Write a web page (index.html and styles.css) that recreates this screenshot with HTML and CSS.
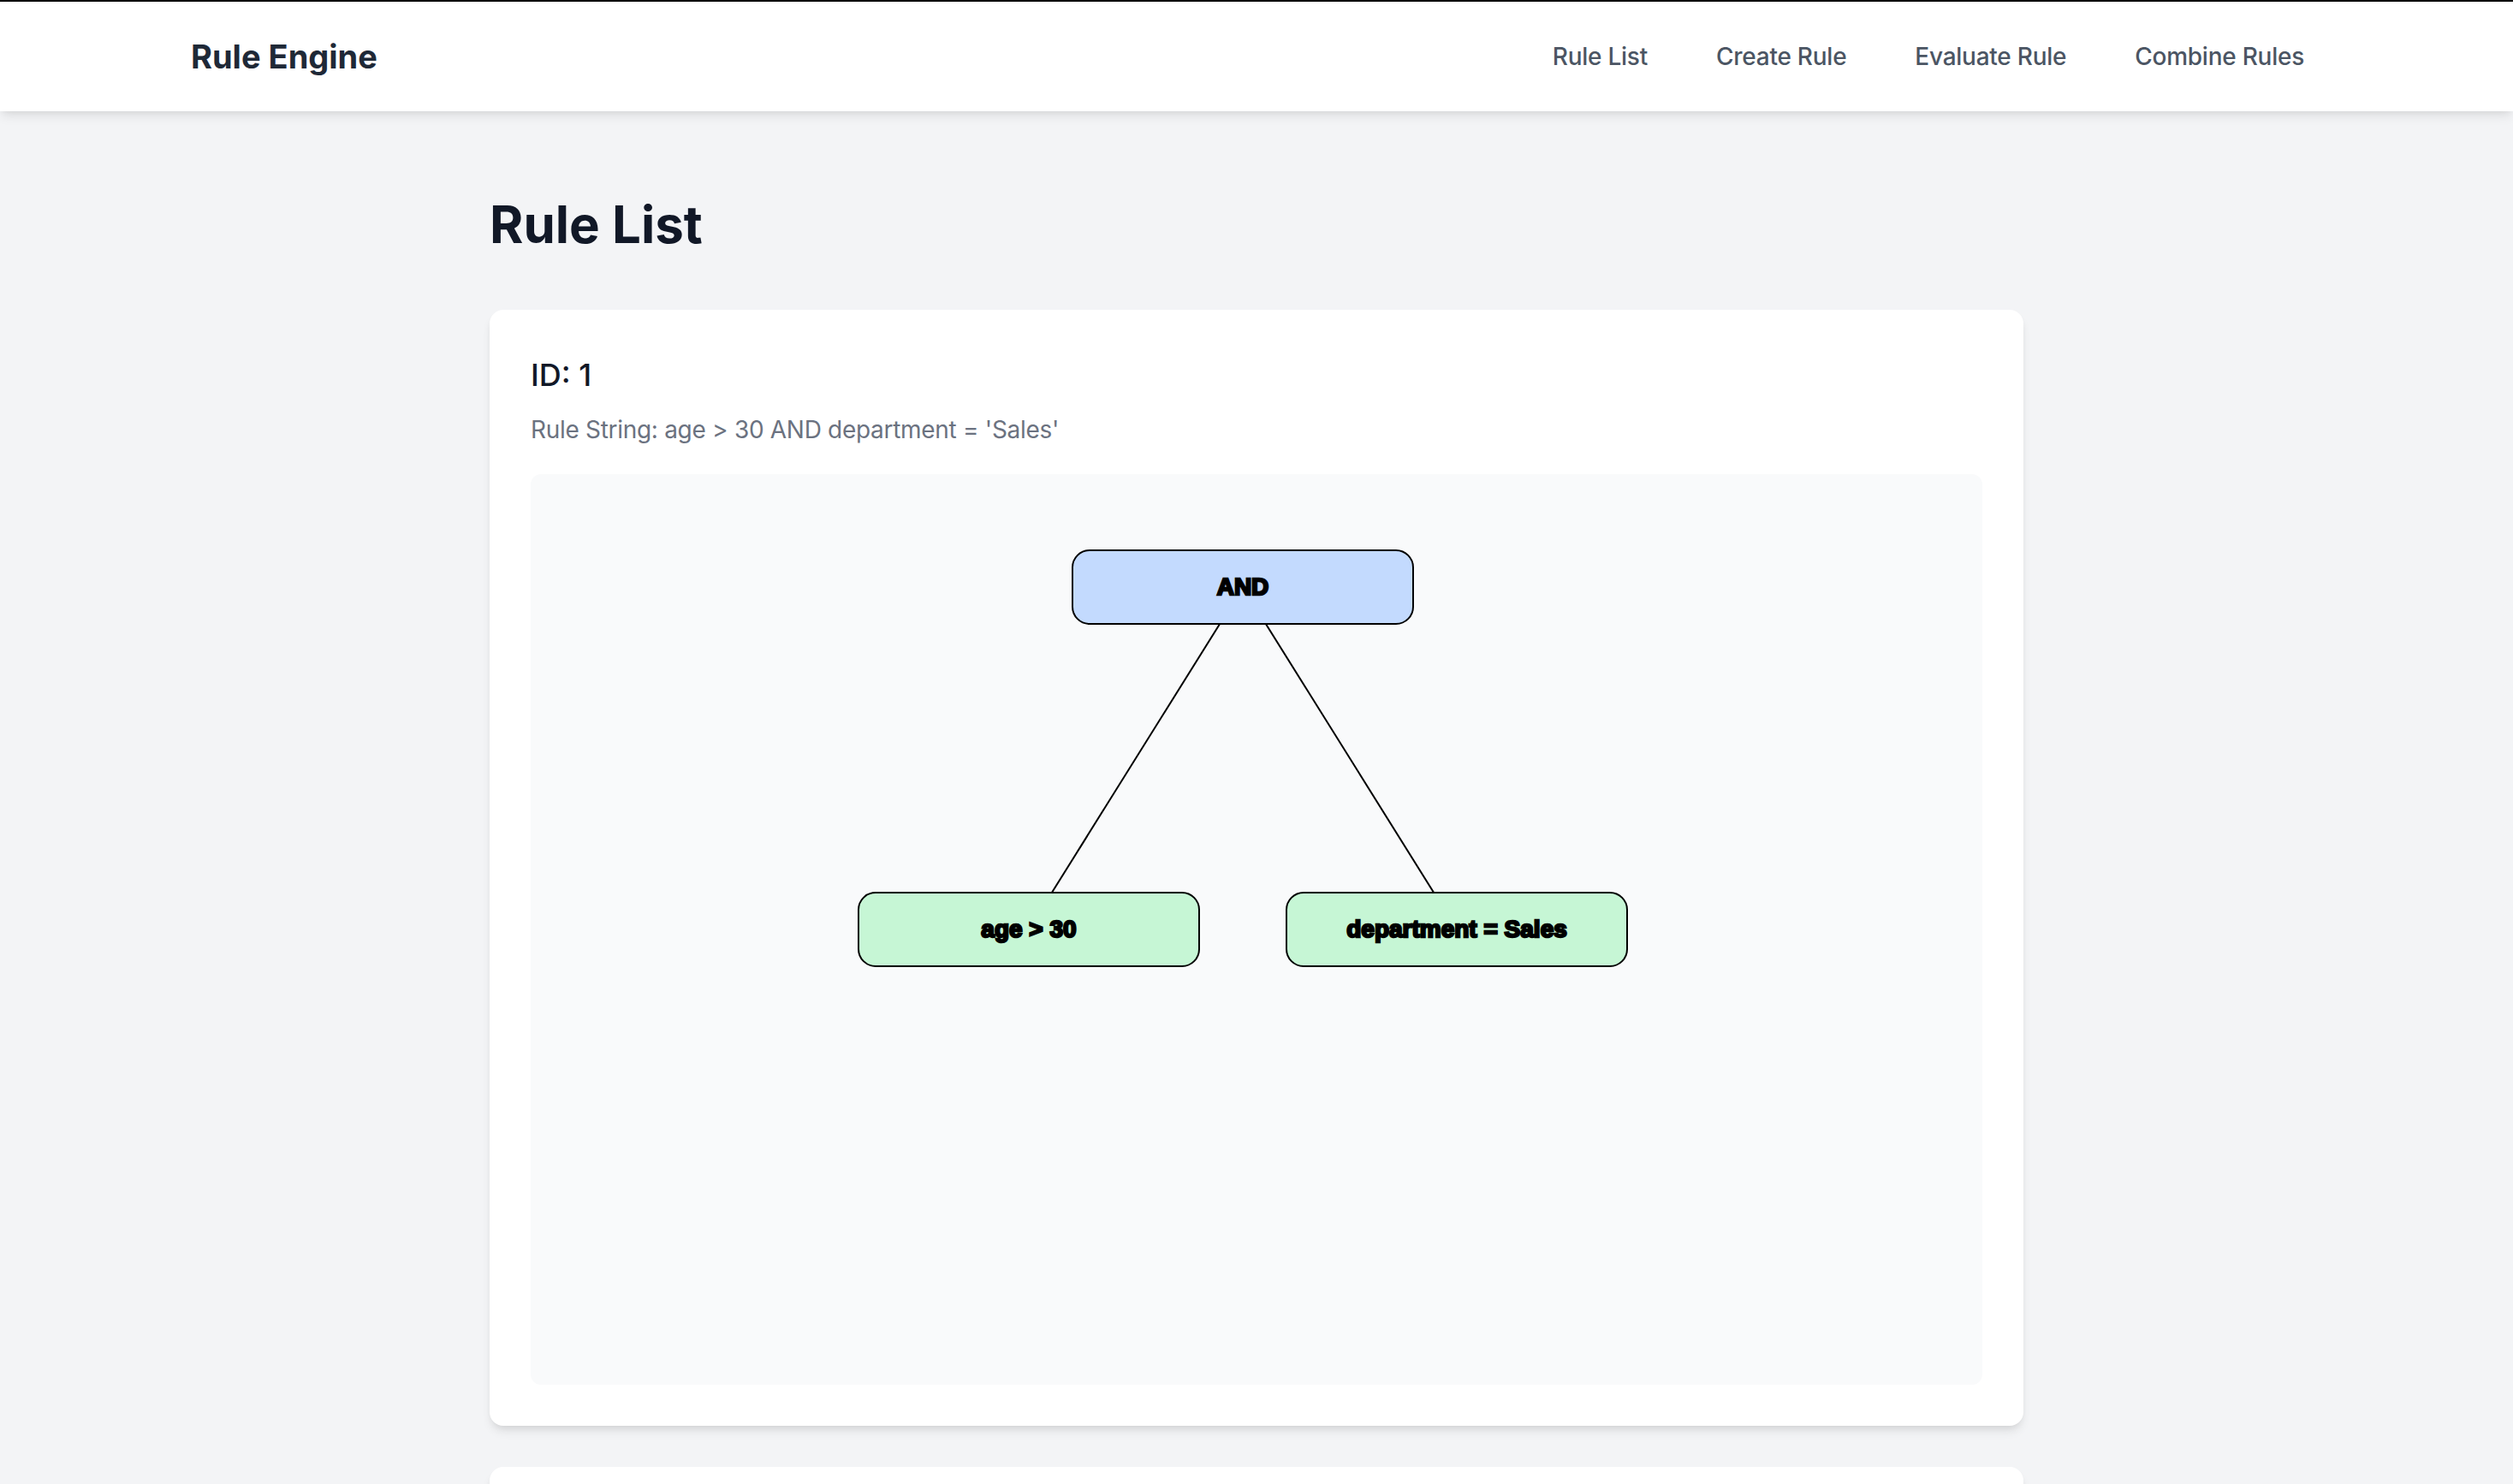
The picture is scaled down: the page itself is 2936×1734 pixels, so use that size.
FILE: index.html
```html
<!DOCTYPE html>
<html lang="en">
<head>
<meta charset="utf-8">
<title>Rule Engine</title>
<link rel="stylesheet" href="styles.css">
</head>
<body>
<header class="topbar">
  <div class="topbar-inner">
    <a class="brand" href="#">Rule Engine</a>
    <nav class="nav">
      <a class="nav-link" href="#">Rule List</a>
      <a class="nav-link" href="#">Create Rule</a>
      <a class="nav-link" href="#">Evaluate Rule</a>
      <a class="nav-link" href="#">Combine Rules</a>
    </nav>
  </div>
</header>
<main class="main">
  <h1 class="page-title">Rule List</h1>
  <div class="rule-list">
    <section class="rule-card">
      <h2 class="rule-id">ID: 1</h2>
      <p class="rule-string">Rule String: age &gt; 30 AND department = 'Sales'</p>
      <div class="tree-box">
        <svg class="tree" viewBox="0 0 1696 1064" width="1696" height="1064">
          <line class="edge" x1="832" y1="132" x2="582" y2="532"/>
          <line class="edge" x1="832" y1="132" x2="1082" y2="532"/>
          <rect class="node node-op" x="633" y="89" width="398" height="86" rx="20" ry="20"/>
          <text class="node-label" x="832" y="141">AND</text>
          <rect class="node node-leaf" x="383" y="489" width="398" height="86" rx="20" ry="20"/>
          <text class="node-label" x="582" y="541">age &gt; 30</text>
          <rect class="node node-leaf" x="883" y="489" width="398" height="86" rx="20" ry="20"/>
          <text class="node-label" x="1082" y="541">department = Sales</text>
        </svg>
      </div>
    </section>
    <section class="rule-card">
      <div class="tree-box"></div>
    </section>
  </div>
</main>
</body>
</html>
```
FILE: styles.css
```css
*, *::before, *::after {
  box-sizing: border-box;
}
html, body {
  margin: 0;
  padding: 0;
}
body {
  background: #f3f4f6;
  font-family: Inter, "Noto Sans", "Liberation Sans", sans-serif;
  border-top: 2px solid #000;
  overflow: hidden;
}
.topbar {
  background: #ffffff;
  height: 128px;
  box-shadow: 0 8px 12px -2px rgba(0,0,0,0.08), 0 4px 8px -4px rgba(0,0,0,0.08);
  position: relative;
  z-index: 2;
}
.topbar-inner {
  max-width: 2560px;
  margin: 0 auto;
  padding: 0 32px;
  height: 100%;
  display: flex;
  align-items: center;
  justify-content: space-between;
}
.brand {
  font-size: 38px;
  font-weight: 700;
  color: #1f2937;
  text-decoration: none;
  line-height: 56px;
  margin-left: 3px;
}
.nav {
  display: flex;
  gap: 32px;
}
.nav-link {
  padding: 16px 24px;
  font-size: 28px;
  line-height: 40px;
  font-weight: 500;
  letter-spacing: -0.25px;
  color: #4b5563;
  text-decoration: none;
}
.main {
  max-width: 1792px;
  margin: 0 auto;
  padding-top: 96px;
}
.page-title {
  margin: 0 0 64px;
  font-size: 60px;
  line-height: 72px;
  font-weight: 700;
  color: #111827;
}
.rule-list {
  display: flex;
  flex-direction: column;
  gap: 48px;
}
.rule-card {
  background: #ffffff;
  border-radius: 16px;
  padding: 48px;
  box-shadow: 0 8px 12px -2px rgba(0,0,0,0.09), 0 4px 8px -4px rgba(0,0,0,0.09);
}
.rule-id {
  margin: 0;
  font-size: 36px;
  line-height: 56px;
  font-weight: 500;
  color: #111827;
}
.rule-string {
  margin: 16px 0 0;
  font-size: 28px;
  line-height: 40px;
  letter-spacing: -0.3px;
  color: #6b7280;
}
.tree-box {
  margin-top: 32px;
  background: #f9fafb;
  border-radius: 12px;
  height: 1064px;
  overflow: hidden;
}
.rule-card .tree-box:first-child {
  margin-top: 0;
}
.tree {
  display: block;
}
.edge {
  stroke: #000;
  stroke-width: 2;
}
.node {
  stroke: #000;
  stroke-width: 2;
}
.node-op {
  fill: #c3dafe;
}
.node-leaf {
  fill: #c6f6d5;
}
.node-label {
  font-family: "Liberation Sans", Arial, sans-serif;
  font-size: 28px;
  font-weight: 700;
  fill: #000;
  stroke: #000;
  stroke-width: 2.4;
  text-anchor: middle;
}
```
